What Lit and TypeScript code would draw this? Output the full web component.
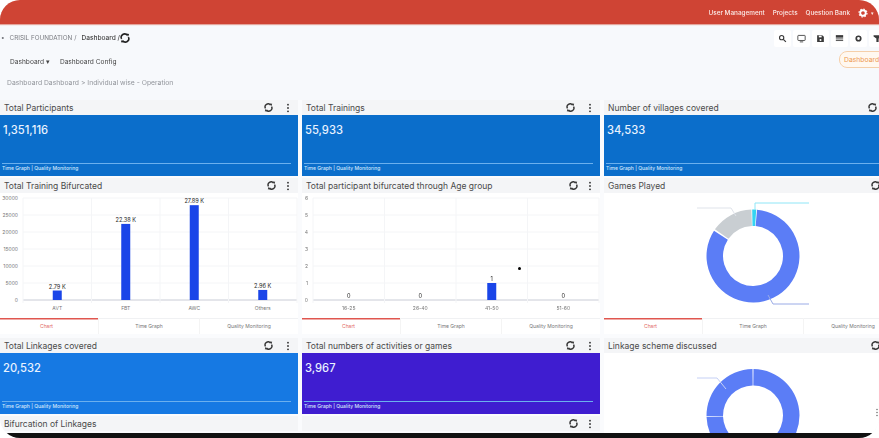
import { LitElement, html, css, svg } from "lit";
import { customElement } from "lit/decorators.js";

const syncIcon = html`<svg class="sync" viewBox="0 0 16 16" width="9" height="9">
  <path d="M2.6 9.5A5.4 5.4 0 0 1 11.6 3.6" fill="none" stroke="currentColor" stroke-width="2.5"/>
  <path d="M13.4 6.5A5.4 5.4 0 0 1 4.4 12.4" fill="none" stroke="currentColor" stroke-width="2.5"/>
  <path d="M10 .8l4.6.6-1.7 4.4z M6 15.2l-4.6-.6 1.7-4.4z" fill="currentColor"/>
</svg>`;

const dotsIcon = html`<svg class="dots" viewBox="0 0 4 12" width="4" height="10">
  <circle cx="2" cy="2" r="1.1" fill="currentColor"/><circle cx="2" cy="6" r="1.1" fill="currentColor"/><circle cx="2" cy="10" r="1.1" fill="currentColor"/>
</svg>`;

const tools = [
  svg`<circle cx="6.5" cy="6.5" r="3.8" fill="none" stroke="currentColor" stroke-width="2"/><path d="M9.5 9.5L14 14" stroke="currentColor" stroke-width="2.2"/>`,
  svg`<rect x="1.5" y="2.5" width="13" height="9" rx="1" fill="none" stroke="currentColor" stroke-width="1.5"/><path d="M5 14h6" stroke="currentColor" stroke-width="1.5"/>`,
  svg`<path d="M2 2h9l3 3v9H2z" fill="currentColor"/><rect x="5" y="3" width="5" height="3" fill="#fff"/><circle cx="8" cy="10.5" r="1.8" fill="#fff"/>`,
  svg`<rect x="1.5" y="2" width="13" height="4.5" fill="currentColor"/><rect x="1.5" y="8" width="13" height="1.5" fill="currentColor"/><rect x="1.5" y="11" width="13" height="1.5" fill="currentColor"/>`,
  svg`<circle cx="8" cy="8" r="4" fill="none" stroke="currentColor" stroke-width="3"/>`,
  svg`<path d="M1 2h14v2.5L10 8v6H6V8L1 4.5z" fill="currentColor"/>`,
];

type Bar = { label: string; value: number; text: string };

function barChart(x0: number, xEnd: number, ticks: string[], max: number, bars: Bar[]) {
  const top = 5;
  const base = 107;
  const step = (xEnd - x0) / bars.length;
  const rowH = (base - top) / (ticks.length - 1);
  return html`<svg class="plot" width="298" height="124" viewBox="0 0 298 124">
    ${ticks.map((t, i) => {
      const y = base - i * rowH;
      return svg`<line x1=${x0} x2=${xEnd} y1=${y} y2=${y} stroke=${i === 0 ? "#c9ccd6" : "#f4f5f7"} stroke-width="1"/>
        <text x=${x0 - 5} y=${y + 2} text-anchor="end" class="tick">${t}</text>`;
    })}
    ${[0, 1, 2, 3, 4].map((i) => svg`<line x1=${x0 + i * step} x2=${x0 + i * step} y1=${top} y2=${base + 3} stroke="#f4f5f7"/>`)}
    ${bars.map((b, i) => {
      const cx = x0 + step * (i + 0.5);
      const h = (b.value / max) * (base - top);
      return svg`${h > 0 ? svg`<rect x=${cx - 4.5} y=${base - h} width="9" height=${h} fill="#1a45e8"/>` : ""}
        <text x=${cx} y=${base - h - 2} text-anchor="middle" class="val">${b.text}</text>
        <text x=${cx} y=${base + 9.5} text-anchor="middle" class="tick">${b.label}</text>`;
    })}
  </svg>`;
}

function arc(cx: number, cy: number, a0: number, a1: number, r: number, ri: number) {
  const p = (a: number, q: number) => {
    const t = ((a - 90) * Math.PI) / 180;
    return `${(cx + q * Math.cos(t)).toFixed(2)} ${(cy + q * Math.sin(t)).toFixed(2)}`;
  };
  const large = a1 - a0 > 180 ? 1 : 0;
  return `M${p(a0, r)}A${r} ${r} 0 ${large} 1 ${p(a1, r)}L${p(a1, ri)}A${ri} ${ri} 0 ${large} 0 ${p(a0, ri)}Z`;
}

type Slice = { from: number; to: number; color: string };

function donut(cy: number, slices: Slice[], leaders: { d: string; color: string }[], height: number) {
  const cx = 149;
  return html`<svg class="plot" width="298" height=${height} viewBox="0 0 298 ${height}">
    ${slices.map((s) => svg`<path d=${arc(cx, cy, s.from, s.to, 46.5, 30)} fill=${s.color}/>`)}
    ${leaders.map((l) => svg`<path d=${l.d} fill="none" stroke=${l.color} stroke-width="1"/>`)}
  </svg>`;
}

@customElement("app-root")
export class AppRoot extends LitElement {
  static styles = css`
    :host {
      display: block;
      width: 879px;
      height: 438px;
      overflow: hidden;
      background: #fff;
      font-family: Inter, "Liberation Sans", sans-serif;
    }
    .frame {
      width: 879px;
      height: 438px;
      border-radius: 20px;
      overflow: hidden;
      display: flex;
      flex-direction: column;
      background: #f7f9fc;
      filter: blur(0.55px);
      position: relative;
    }
    .topbar {
      flex: 0 0 24px;
      background: #cf4434;
      display: flex;
      align-items: center;
      justify-content: flex-end;
      gap: 8px;
      padding: 1px 5px 0 0;
      color: #fbeae7;
      font-size: 6.4px;
      font-weight: 500;
      box-sizing: border-box;
      box-shadow: 0 1px 1px #e4a59c;
    }
    .caret { font-size: 5px; margin-left: -5px; }
    .head {
      flex: 0 0 76px;
      display: flex;
      flex-direction: column;
      position: relative;
    }
    .crumb {
      height: 26px;
      padding-top: 1px;
      box-sizing: border-box;
      display: flex;
      align-items: center;
      font-size: 6.3px;
      color: #77797f;
      padding-left: 1px;
      gap: 3px;
    }
    .crumb .gap { margin-right: 2px; }
    .crumb .org { margin-right: 2px; }
    .crumb b { font-weight: 500; color: #444; font-size: 6.6px; }
    .crumb .sync { color: #222; width: 10px; height: 10px; margin-left: -3px; }
    .nav {
      height: 20px;
      margin-top: 2px;
      display: flex;
      align-items: center;
      gap: 10px;
      padding-left: 10px;
      font-size: 6.6px;
      color: #444;
    }
    .path {
      height: 20px;
      display: flex;
      align-items: center;
      padding-left: 7px;
      font-size: 6.8px;
      color: #92959b;
    }
    .tools {
      position: absolute;
      top: 6px;
      right: -7px;
      display: flex;
      gap: 2px;
    }
    .tool {
      width: 17px;
      height: 17px;
      background: #fff;
      border-radius: 2px;
      display: flex;
      align-items: center;
      justify-content: center;
      color: #3a3a3a;
    }
    .pill {
      position: absolute;
      top: 27px;
      left: 839px;
      height: 15px;
      padding: 0 14px 0 4px;
      border: 1px solid #f5cfa9;
      border-radius: 8px;
      color: #ee9a52;
      background: #fff8f0;
      font-size: 6.8px;
      line-height: 15px;
    }
    .grid {
      flex: 1 1 0;
      min-height: 0;
      display: grid;
      grid-template-columns: repeat(3, 298px);
      grid-template-rows: 76px 158px 76px auto;
      column-gap: 4px;
      row-gap: 2px;
      overflow: hidden;
      background: #fafbfd;
    }
    .card { display: flex; flex-direction: column; min-height: 0; overflow: hidden; }
    .chart-card { padding-bottom: 2px; box-sizing: border-box; }
    .title {
      flex: 0 0 15px;
      display: flex;
      align-items: center;
      background: #f4f5f7;
      color: #4a4a4a;
      font-size: 8.5px;
      font-weight: 400;
      padding-left: 4px;
    }
    .title span { flex: 1; white-space: nowrap; }
    .title .sync { color: #333; margin-right: 10px; }
    .title .dots { color: #333; margin-right: 8px; }
    .stat-title .sync { margin-right: 13px; }
    .stat {
      flex: 1;
      display: flex;
      flex-direction: column;
      color: #e8f2ff;
      padding: 8px 0 0 3px;
    }
    .stat .num { flex: 1; font-size: 11.2px; font-weight: 500; }
    .stat .links {
      height: 12px;
      margin-right: 7px;
      margin-left: -1px;
      border-top: 1px solid #6bb0ee;
      font-size: 5px;
      font-weight: 500;
      line-height: 9px;
      color: #d5e8fb;
    }
    .body { flex: 1; min-height: 0; background: #fff; }
    .plot { display: block; }
    .tick { font-size: 5px; fill: #777; font-family: Inter, "Liberation Sans", sans-serif; }
    .val { font-size: 5.6px; fill: #222; font-family: Inter, "Liberation Sans", sans-serif; }
    .tabs {
      flex: 0 0 16px;
      display: grid;
      grid-template-columns: 98px 101px 99px;
      background: #fff;
      font-size: 5px;
      color: #777;
      text-align: center;
      line-height: 16px;
    }
    .tabs div { box-shadow: inset 0 1px 0 #f0f1f3; }
    .tabs div + div { border-left: 1px solid #f4f4f4; }
    .tabs .on { color: #df6a64; box-shadow: inset 0 1.5px 0 #e0564f; padding-right: 5px; }
    .cursor {
      position: absolute;
      left: 517.5px;
      top: 266.5px;
      width: 3.5px;
      height: 3.5px;
      border-radius: 50%;
      background: #000;
    }
    .handle {
      position: absolute;
      left: 875px;
      top: 408px;
      color: #777;
    }
    .strip { flex: 0 0 5px; background: #111; }
  `;

  private title(name: string, icons = true, extra = "") {
    return html`<div class="title ${extra}"><span>${name}</span>${icons ? html`${syncIcon}${dotsIcon}` : ""}</div>`;
  }

  private stat(name: string, num: string, color: string) {
    return html`<div class="card">
      ${this.title(name, true, "stat-title")}
      <div class="stat" style="background:${color}">
        <div class="num">${num}</div>
        <div class="links">Time Graph | Quality Monitoring</div>
      </div>
    </div>`;
  }

  private chart(name: string, content: unknown) {
    return html`<div class="card chart-card">
      ${this.title(name)}
      <div class="body">${content}</div>
      <div class="tabs"><div class="on">Chart</div><div>Time Graph</div><div>Quality Monitoring</div></div>
    </div>`;
  }

  render() {
    const trainings = barChart(23, 297, ["0", "5000", "10000", "15000", "20000", "25000", "30000"], 30000, [
      { label: "AVT", value: 2790, text: "2.79 K" },
      { label: "FBT", value: 22380, text: "22.38 K" },
      { label: "AWC", value: 27890, text: "27.89 K" },
      { label: "Others", value: 2960, text: "2.96 K" },
    ]);
    const ages = barChart(11, 297, ["0", "1", "2", "3", "4", "5", "6"], 6, [
      { label: "16-25", value: 0, text: "0" },
      { label: "26-40", value: 0, text: "0" },
      { label: "41-50", value: 1, text: "1" },
      { label: "51-60", value: 0, text: "0" },
    ]);
    const games = donut(
      63,
      [
        { from: 5, to: 303, color: "#5b7df6" },
        { from: 305, to: 358, color: "#c9ced2" },
        { from: 359, to: 364, color: "#34d4f2" },
      ],
      [
        { d: "M93 15H127L132 23", color: "#dfe3ea" },
        { d: "M151 17V10H205", color: "#8fe6f7" },
        { d: "M164 102L169 111H205", color: "#9aabe6" },
      ],
      124,
    );
    const linkage = donut(
      62.5,
      [
        { from: 0.6, to: 268, color: "#5b7df6" },
        { from: 269, to: 359.4, color: "#5b7df6" },
      ],
      [{ d: "M93 25H113L122 36", color: "#c5d0f5" }],
      80,
    );
    return html`<div class="frame">
      <div class="topbar">
        <span>User Management</span><span>Projects</span><span>Question Bank</span>
        <svg viewBox="0 0 16 16" width="10" height="10"><circle cx="8" cy="8" r="4.4" fill="none" stroke="#fff" stroke-width="3"/><circle cx="8" cy="8" r="6.4" fill="none" stroke="#fff" stroke-width="1.8" stroke-dasharray="2.4 2.6"/></svg>
        <span class="caret">▾</span>
      </div>
      <div class="head">
        <div class="crumb"><span class="gap">•</span><span class="org">CRISIL FOUNDATION /</span><b>Dashboard /</b>${syncIcon}</div>
        <div class="nav"><span>Dashboard ▾</span><span>Dashboard Config</span></div>
        <div class="path">Dashboard Dashboard &gt; Individual wise - Operation</div>
        <div class="tools">
          ${tools.map((t) => html`<div class="tool"><svg viewBox="0 0 16 16" width="9" height="9">${t}</svg></div>`)}
        </div>
        <div class="pill">Dashboard</div>
      </div>
      <div class="grid">
        ${this.stat("Total Participants", "1,351,116", "#0b6ecb")}
        ${this.stat("Total Trainings", "55,933", "#0b6ecb")}
        ${this.stat("Number of villages covered", "34,533", "#0b6ecb")}
        ${this.chart("Total Training Bifurcated", trainings)}
        ${this.chart("Total participant bifurcated through Age group", ages)}
        ${this.chart("Games Played", games)}
        ${this.stat("Total Linkages covered", "20,532", "#1679e3")}
        ${this.stat("Total numbers of activities or games", "3,967", "#3f1dd0")}
        <div class="card" style="grid-row: span 2">${this.title("Linkage scheme discussed")}<div class="body">${linkage}</div></div>
        <div class="card">${this.title("Bifurcation of Linkages", false)}</div>
        <div class="card">${this.title("", true)}</div>
      </div>
      <div class="strip"></div>
      <div class="cursor"></div>
      <svg class="handle" width="4" height="9" viewBox="0 0 4 12">
        <circle cx="2" cy="2" r="1.1" fill="currentColor"/><circle cx="2" cy="6" r="1.1" fill="currentColor"/><circle cx="2" cy="10" r="1.1" fill="currentColor"/>
      </svg>
    </div>`;
  }
}
